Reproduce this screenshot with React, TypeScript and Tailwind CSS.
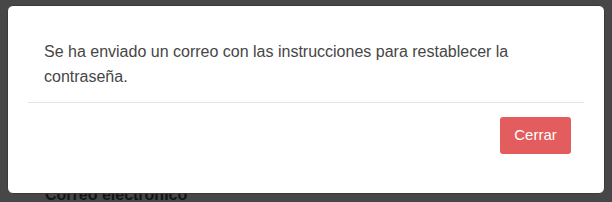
export default function App() {
  return (
    <div
      className="relative w-[612px] h-[202px] overflow-hidden bg-[#474747]"
      style={{ fontFamily: '"Liberation Sans", Arial, sans-serif' }}
    >
      {/* page behind the backdrop */}
      <div className="pt-[185px] pl-[45px]">
        <label className="block text-[16px] leading-[20px] font-bold text-[#141414]">Correo electrónico</label>
      </div>

      {/* modal */}
      <div className="absolute left-[7px] top-[5px] w-[598px] h-[189px] flex flex-col rounded-[6px] border border-[#3a3a3a] bg-white">
        <div className="pt-[33px] pl-[36px] pr-[40px] h-[96px]">
          <p className="text-[16px] leading-[25px] text-[#464646]">
            Se ha enviado un correo con las instrucciones para restablecer la contraseña.
          </p>
        </div>
        <div className="mx-[20px] border-t border-[#e5e5e5]" />
        <div className="flex justify-end pt-[14px] pr-[33px]">
          <button className="w-[71px] h-[37px] rounded-[3px] bg-[#e35d5e] text-white text-[15px]">Cerrar</button>
        </div>
      </div>
    </div>
  );
}
